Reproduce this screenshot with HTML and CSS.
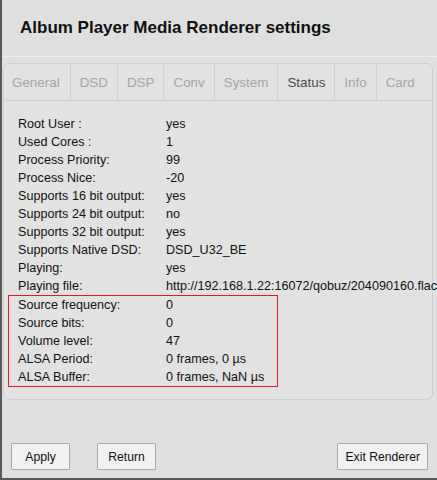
FILE: index.html
```html
<!DOCTYPE html>
<html>
<head>
<meta charset="utf-8">
<link rel="stylesheet" href="styles.css">
</head>
<body>
<div class="window">
  <h1 class="title">Album Player Media Renderer settings</h1>
  <div class="panel">
    <div class="tabs">
      <div class="tab">General</div>
      <div class="tab">DSD</div>
      <div class="tab">DSP</div>
      <div class="tab">Conv</div>
      <div class="tab">System</div>
      <div class="tab active">Status</div>
      <div class="tab">Info</div>
      <div class="tab last">Card</div>
    </div>
    <div class="rows">
      <div class="row"><span class="label">Root User :</span><span class="value">yes</span></div>
      <div class="row"><span class="label">Used Cores :</span><span class="value">1</span></div>
      <div class="row"><span class="label">Process Priority:</span><span class="value">99</span></div>
      <div class="row"><span class="label">Process Nice:</span><span class="value">-20</span></div>
      <div class="row"><span class="label">Supports 16 bit output:</span><span class="value">yes</span></div>
      <div class="row"><span class="label">Supports 24 bit output:</span><span class="value">no</span></div>
      <div class="row"><span class="label">Supports 32 bit output:</span><span class="value">yes</span></div>
      <div class="row"><span class="label">Supports Native DSD:</span><span class="value">DSD_U32_BE</span></div>
      <div class="row"><span class="label">Playing:</span><span class="value">yes</span></div>
      <div class="row"><span class="label">Playing file:</span><span class="value">http://192.168.1.22:16072/qobuz/204090160.flac</span></div>
      <div class="highlight">
        <div class="row"><span class="label">Source frequency:</span><span class="value">0</span></div>
        <div class="row"><span class="label">Source bits:</span><span class="value">0</span></div>
        <div class="row"><span class="label">Volume level:</span><span class="value">47</span></div>
        <div class="row"><span class="label">ALSA Period:</span><span class="value">0 frames, 0 µs</span></div>
        <div class="row"><span class="label">ALSA Buffer:</span><span class="value">0 frames, NaN µs</span></div>
      </div>
    </div>
  </div>
  <div class="buttons">
    <button class="btn">Apply</button>
    <button class="btn">Return</button>
    <span class="spacer"></span>
    <button class="btn">Exit Renderer</button>
  </div>
</div>
</body>
</html>
```
FILE: styles.css
```css
html, body {
  margin: 0;
  padding: 0;
}
body {
  width: 437px;
  height: 480px;
  overflow: hidden;
  background: #dfdfdf;
  font-family: "Liberation Sans", Arial, sans-serif;
  color: #111;
}
.window {
  box-sizing: border-box;
  width: 437px;
  height: 480px;
  border-left: 2px solid #595959;
  border-bottom: 2px solid #595959;
  display: flex;
  flex-direction: column;
  overflow: hidden;
}
.title {
  margin: 0;
  padding: 18px 0 0 18px;
  height: 38px;
  font-size: 17px;
  font-weight: bold;
  color: #111;
  border-bottom: 1px solid #ececec;
}
.panel {
  margin: 6px 0 0 1px;
  width: 428px;
  border: 1px solid #d0d0d0;
  border-radius: 7px;
  background: #e2e2e2;
  flex: none;
}
.tabs {
  display: flex;
  height: 36px;
  border-bottom: 1px solid #d0d0d0;
}
.tab {
  padding: 0 9px 0 9px;
  border-right: 1px solid #d0d0d0;
  display: flex;
  align-items: center;
  font-size: 13.4px;
  color: #a6a6a6;
}
.tab:first-child {
  padding-left: 8px;
  padding-right: 10px;
}
.tab.last {
  border-right: none;
}
.tab.active {
  color: #4a4a4a;
}
.rows {
  padding: 14px 0 12px 14px;
  font-size: 12.6px;
  white-space: nowrap;
}
.row {
  display: flex;
  height: 18px;
  align-items: center;
}
.label {
  width: 148px;
  flex: none;
}
.value {
  flex: none;
}
.highlight {
  margin-left: -10px;
  padding-left: 9px;
  width: 259px;
  border: 1px solid #e41c26;
}
.buttons {
  display: flex;
  margin-top: auto;
  padding: 0 9px 8px 9px;
  gap: 27px;
}
.spacer {
  flex: 1;
}
.btn {
  height: 27px;
  min-width: 59px;
  padding: 0 7px;
  font-family: "Liberation Sans", Arial, sans-serif;
  font-size: 12.2px;
  color: #111;
  background: #f1f1f1;
  border: 1px solid #a9a9a9;
  border-radius: 1px;
}
```
